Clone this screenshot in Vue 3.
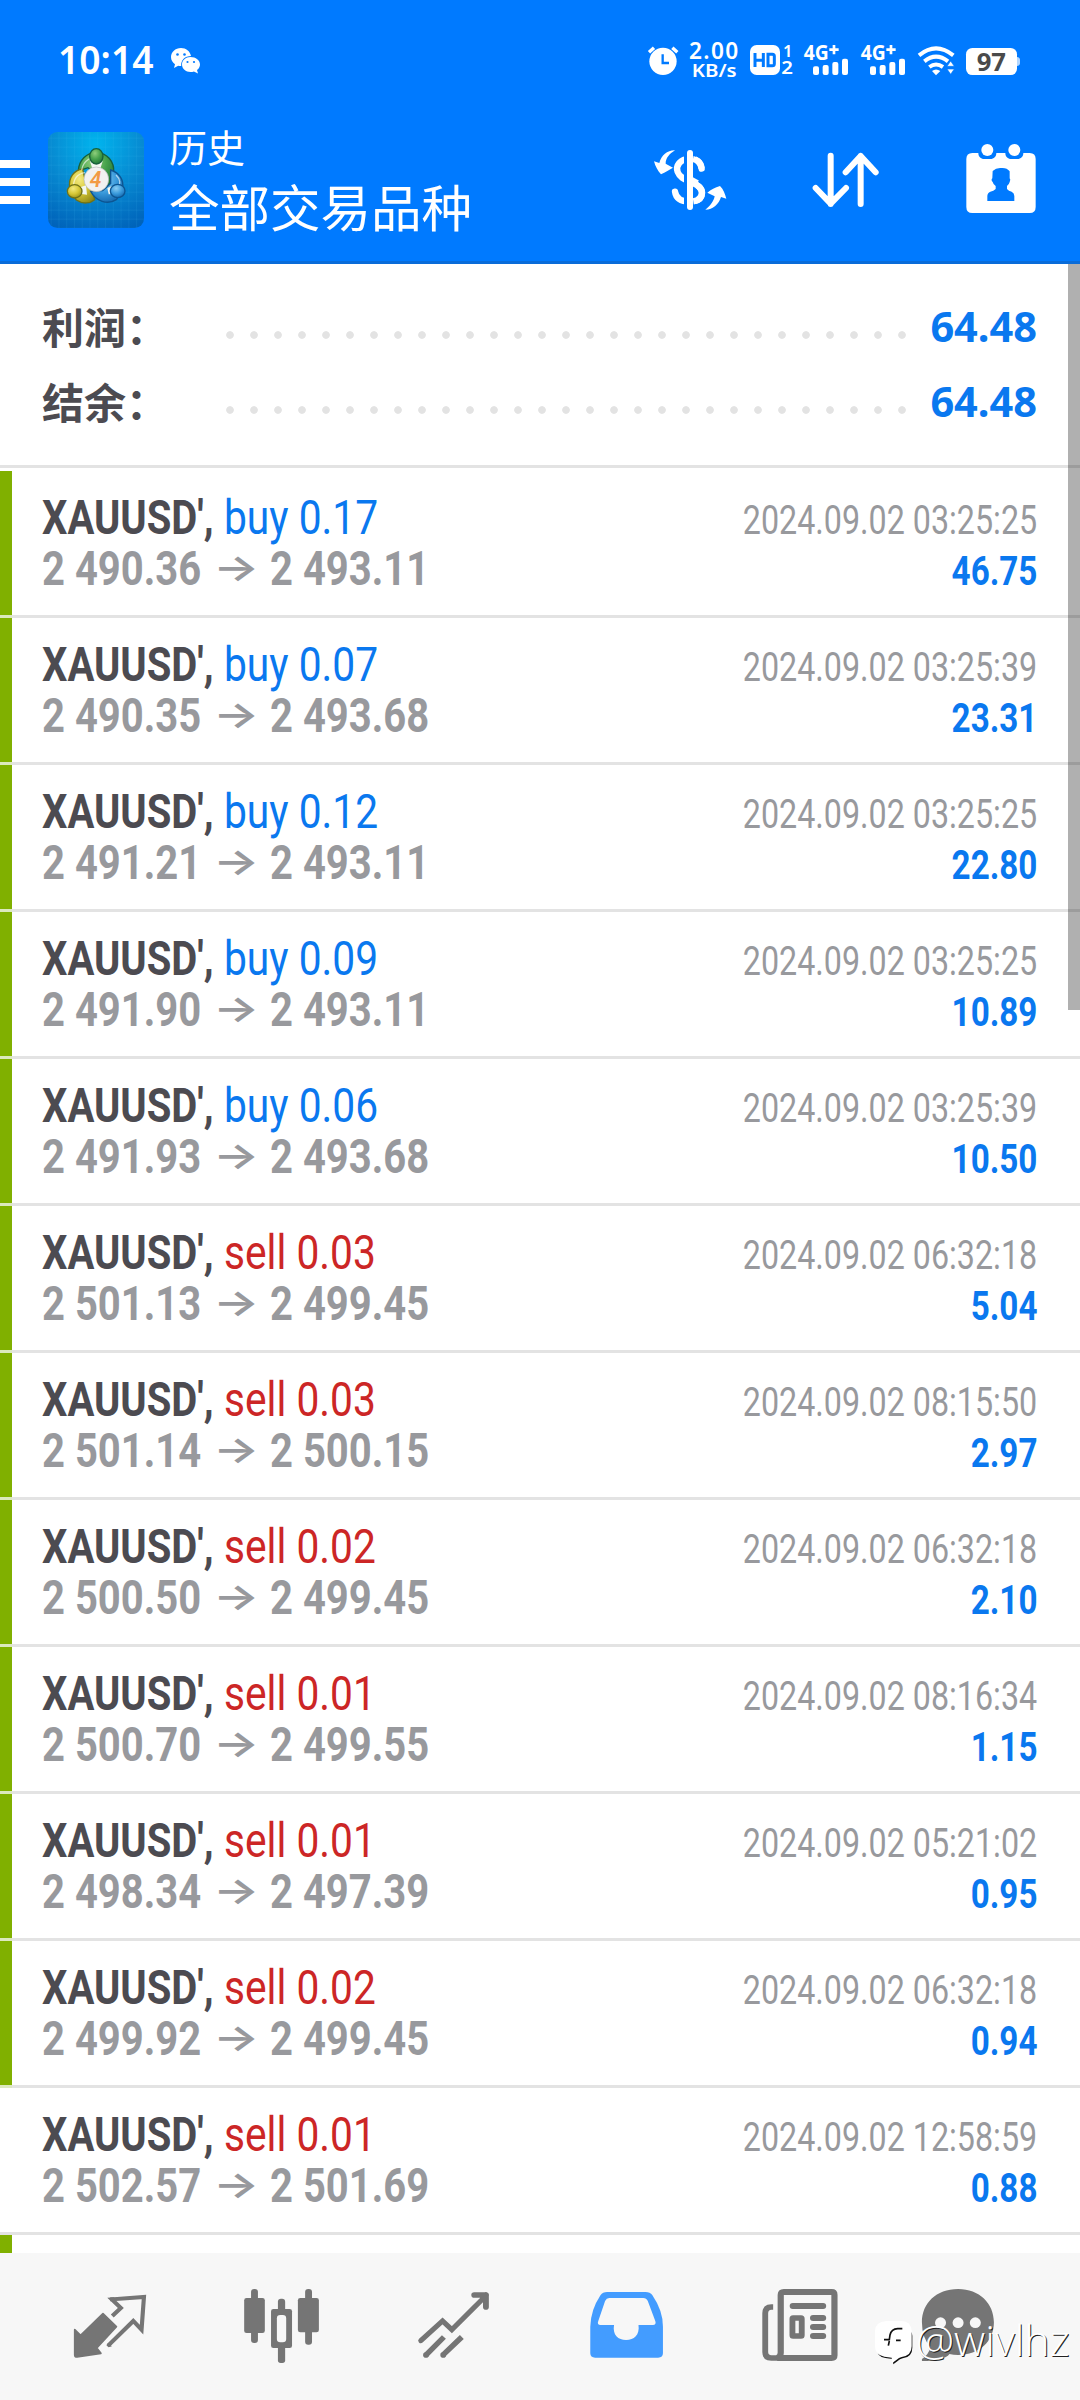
<script setup>
const summary = [
  { label: '利润：', value: '64.48' },
  { label: '结余：', value: '64.48' },
]

const deals = [
  ['buy', '0.17', '2 490.36', '2 493.11', '03:25:25', '46.75'],
  ['buy', '0.07', '2 490.35', '2 493.68', '03:25:39', '23.31'],
  ['buy', '0.12', '2 491.21', '2 493.11', '03:25:25', '22.80'],
  ['buy', '0.09', '2 491.90', '2 493.11', '03:25:25', '10.89'],
  ['buy', '0.06', '2 491.93', '2 493.68', '03:25:39', '10.50'],
  ['sell', '0.03', '2 501.13', '2 499.45', '06:32:18', '5.04'],
  ['sell', '0.03', '2 501.14', '2 500.15', '08:15:50', '2.97'],
  ['sell', '0.02', '2 500.50', '2 499.45', '06:32:18', '2.10'],
  ['sell', '0.01', '2 500.70', '2 499.55', '08:16:34', '1.15'],
  ['sell', '0.01', '2 498.34', '2 497.39', '05:21:02', '0.95'],
  ['sell', '0.02', '2 499.92', '2 499.45', '06:32:18', '0.94'],
  ['sell', '0.01', '2 502.57', '2 501.69', '12:58:59', '0.88', true],
].map(([side, volume, open, close, time, profit, plain]) => ({
  side, volume, open, close, time, profit, marked: !plain,
}))
</script>

<template>
  <div class="screen">
    <header class="header">
      <div class="status">
        <div class="status-left">
          <span class="clock"><span>10:14</span></span>
          <svg class="wechat" width="30" height="26" viewBox="0 0 30 26">
            <path fill="#fff" d="M10 0C4.300 0 0 4 0 9c0 3 1.500 5.500 4 7.200L3 20l4.200-2.200c1 .2 2 .3 3 .2C9.600 12 14 8 20 8 19 3.200 15 0 10 0Z" />
            <path fill="#fff" d="M19.500 9C14.700 9 11 12.300 11 16.500S14.700 24 19.500 24c1.200 0 2.400-.2 3.400-.6L27 25.500l-1-3.400c1.900-1.400 3-3.400 3-5.600C29 12.300 24.800 9 19.500 9Z" />
            <g fill="#007aff"><circle cx="6.500" cy="6.500" r="1.300" /><circle cx="13.500" cy="6.500" r="1.300" /><circle cx="16.500" cy="14" r="1.100" /><circle cx="23" cy="14" r="1.100" /></g>
          </svg>
        </div>
        <svg class="status-right" width="460" height="48" viewBox="0 48 1380 144">
          <circle cx="129" cy="124" r="41" fill="#fff" />
          <path d="M87 97L102 83M172 97L157 83" stroke="#fff" stroke-width="10" />
          <path d="M128 103V129H147" fill="none" stroke="#007aff" stroke-width="7" />
          <g fill="#fff" class="status-text">
            <text x="207" y="116" font-size="68" textLength="148">2.00</text>
            <text x="215" y="171" font-size="56" textLength="135" lengthAdjust="spacingAndGlyphs">KB/s</text>
          </g>
          <rect x="390" y="75" width="90" height="90" rx="20" fill="#fff" />
          <path d="M405 99V141M430 99V141M405 121H430M444 103H457Q463 103 463 109V131Q463 137 457 137H444Z" fill="none" stroke="#007aff" stroke-width="9" />
          <g fill="#fff" class="status-text">
            <text x="489" y="111" font-size="50">1</text>
            <text x="484" y="162" font-size="53" textLength="35" lengthAdjust="spacingAndGlyphs">2</text>
          </g>
          <g v-for="dx in [0, 171]" :key="dx" :transform="`translate(${dx} 0)`" fill="#fff">
            <text class="status-text heavy" x="551" y="119" font-size="62" textLength="75" lengthAdjust="spacingAndGlyphs">4G</text>
            <path d="M628 89H656M642 75V103" stroke="#fff" stroke-width="8" />
            <rect x="579" y="139" width="18" height="26" rx="6" />
            <rect x="608" y="135" width="18" height="30" rx="6" />
            <rect x="637" y="126" width="18" height="39" rx="6" />
            <rect x="666" y="116" width="18" height="49" rx="6" />
          </g>
          <g fill="none" stroke="#fff" stroke-width="12">
            <path d="M897 106Q948 64 1000 106" />
            <path d="M913 124Q948 96 984 124" />
            <path d="M928 141Q948 126 969 141" />
          </g>
          <path d="M936 153Q948 144 961 153L948 166Z" fill="#fff" />
          <path d="M992 123L1003 139H981ZM992 163L981 147H1003Z" fill="#fff" stroke="#007aff" stroke-width="2" />
          <rect x="1038" y="84" width="153" height="81" rx="19" fill="#fff" />
          <path d="M1191 111Q1200 112 1200 120V129Q1200 137 1191 138Z" fill="#fff" opacity=".7" />
          <text class="status-text heavy" x="1070" y="152" font-size="73" fill="#4a4a4a" textLength="88" lengthAdjust="spacingAndGlyphs">97</text>
        </svg>
      </div>

      <div class="toolbar">
        <div class="menu"><i></i><i></i><i></i></div>
        <svg class="logo" width="96" height="96" viewBox="54 36 288 288">
          <defs>
            <radialGradient id="sky" cx=".5" cy=".12" r=".95">
              <stop offset="0" stop-color="#00b4ee" /><stop offset=".5" stop-color="#078bd2" /><stop offset="1" stop-color="#0063ba" />
            </radialGradient>
            <pattern id="mesh" x="62" y="53" width="23.300" height="27" patternUnits="userSpaceOnUse">
              <path d="M0 0H23.300M0 0V27" stroke="#50c4f4" stroke-opacity=".3" stroke-width="2" />
            </pattern>
            <radialGradient id="green" cx=".4" cy=".3" r=".8"><stop offset="0" stop-color="#8fce7c" /><stop offset=".5" stop-color="#45a14b" /><stop offset="1" stop-color="#1b6c36" /></radialGradient>
            <radialGradient id="yellow" cx=".4" cy=".3" r=".8"><stop offset="0" stop-color="#f3ea80" /><stop offset=".5" stop-color="#d6c737" /><stop offset="1" stop-color="#8d8615" /></radialGradient>
            <radialGradient id="blue" cx=".4" cy=".3" r=".8"><stop offset="0" stop-color="#8accf2" /><stop offset=".5" stop-color="#3b9bdc" /><stop offset="1" stop-color="#0c5ea6" /></radialGradient>
          </defs>
          <rect x="54" y="36" width="288" height="288" rx="28" fill="url(#sky)" />
          <rect x="54" y="36" width="288" height="288" rx="28" fill="url(#mesh)" />
          <g stroke-width="4">
            <path d="M145 153C146 120 170 98 199 98C231 98 254 125 251 158C250 176 243 190 233 198L212 174L174 143Z" fill="url(#green)" stroke="#17603a" />
            <path d="M158 147C132 150 115 172 119 203L139 240C158 253 180 251 194 239L186 206L168 190Z" fill="url(#yellow)" stroke="#6f7218" />
            <path d="M242 150C269 158 283 182 277 207L260 238C233 257 196 243 182 214L218 212L242 190Z" fill="url(#blue)" stroke="#0d5592" />
            <path d="M130 204C130 175 143 161 165 158M155 150C160 120 187 107 210 112M258 165C272 178 272 194 264 202" fill="none" stroke="#fff" stroke-opacity=".6" stroke-width="4" />
            <path d="M180 124L218 124L211 146H187ZM153 201L168 196L171 224L155 222ZM232 204L246 198L249 222L236 223Z" fill="#f3f7f1" />
            <ellipse cx="199" cy="109" rx="20" ry="23" fill="url(#green)" stroke="#17603a" />
            <ellipse cx="134" cy="214" rx="22" ry="20" fill="url(#yellow)" stroke="#6f7218" />
            <ellipse cx="263" cy="213" rx="22" ry="20" fill="url(#blue)" stroke="#0d5592" />
          </g>
          <circle cx="199" cy="178" r="37" fill="#f2f1f0" stroke="#b4b8ba" stroke-width="2" />
          <text x="179" y="201" font-size="64" class="logo-digit" textLength="35" lengthAdjust="spacingAndGlyphs">4</text>
        </svg>
        <div class="titles">
          <div class="title-small">历史</div>
          <div class="title-big">全部交易品种</div>
        </div>
        <div class="actions">
          <svg width="153.330" height="96" viewBox="0 336 460 288">
            <g fill="#fff">
              <path d="M165 391C148 402 137 414 137 431L159 443C149 449 136 456 123 463C113 452 106 440 102 424L118 429C124 405 143 390 165 391Z" />
              <path d="M256 569C270 558 281 545 284 529L262 518C273 509 285 503 300 498C311 509 315 522 319 536L303 531C297 552 279 569 256 569Z" />
            </g>
            <path d="M245 446C243 425 228 415 210 416C180 417 166 437 173 456C179 472 194 478 210 485C232 494 247 503 246 520C244 539 226 545 209 545C184 545 168 536 165 515" fill="none" stroke="#fff" stroke-width="19" stroke-linecap="round" />
            <path d="M210 390V570" stroke="#007aff" stroke-width="36" />
            <path d="M210 478L232 490" stroke="#fff" stroke-width="19" />
            <path d="M219 417Q240 421 245 445M220 544Q246 540 246 518Q245 500 219 489" fill="none" stroke="#fff" stroke-width="19" />
            <path d="M210 399V561" stroke="#fff" stroke-width="18" stroke-linecap="round" />
          </svg>
          <svg width="153.330" height="96" viewBox="460 336 460 288">
            <path d="M633 407V552M588 504L633 551L679 504M723 552V408M678 457L723 408L768 457" fill="none" stroke="#fff" stroke-width="18" stroke-linecap="round" stroke-linejoin="round" />
          </svg>
          <svg width="153.330" height="96" viewBox="920 336 460 288">
            <path fill="#fff" d="M1056 399H1074C1074 410 1081 417 1092 417H1110C1121 417 1128 410 1128 399H1155C1155 410 1162 417 1173 417H1191C1202 417 1209 410 1209 399H1228Q1246 399 1246 417V561Q1246 579 1228 579H1056Q1038 579 1038 561V417Q1038 399 1056 399Z" />
            <circle cx="1101" cy="390" r="18" fill="#fff" /><circle cx="1182" cy="390" r="18" fill="#fff" />
            <path fill="#007aff" d="M1117 453Q1128 442 1144 444Q1160 443 1168 454V475Q1172 479 1168 486Q1166 494 1160 498V507Q1165 513 1174 515Q1182 519 1182 528V543H1101V528Q1101 519 1110 515Q1120 513 1126 507V498Q1119 494 1117 486Q1111 480 1116 475Z" />
          </svg>
        </div>
      </div>
    </header>

    <main class="content">
      <section class="summary">
        <div v-for="item in summary" :key="item.label" class="summary-row">
          <span class="summary-label">{{ item.label }}</span>
          <span class="dots"></span>
          <span class="summary-value">{{ item.value }}</span>
        </div>
      </section>

      <section class="deals">
        <article v-for="(deal, i) in deals" :key="i" class="deal" :class="{ marked: deal.marked }">
          <div class="deal-main">
            <div class="deal-line">
              <span class="symbol"><b>XAUUSD',</b></span>
              <span class="side" :class="deal.side">{{ deal.side }} {{ deal.volume }}</span>
            </div>
            <div class="deal-line prices">
              <span class="price"><b>{{ deal.open }}</b></span>
              <span class="arrow"><span>→</span></span>
              <span class="price"><b>{{ deal.close }}</b></span>
            </div>
          </div>
          <div class="deal-side">
            <span class="time">2024.09.02 {{ deal.time }}</span>
            <span class="profit">{{ deal.profit }}</span>
          </div>
        </article>
        <article class="deal marked partial"></article>
      </section>
      <div class="scrollbar"></div>
    </main>

    <nav class="tabs">
      <svg viewBox="0 579 522.670 441" preserveAspectRatio="none">
        <path fill="#757575" stroke="#757575" stroke-width="5" stroke-linejoin="round" d="M299 761L338 800L281 864L293 880L224 891Q217 891 217 884V809L234 826Z" />
        <path fill="none" stroke="#757575" stroke-width="12" d="M326 768L351 744L325 718L418 711L411 809L387 783L314 857" />
        <path fill="#757575" d="M320 712L332 712V724H320ZM309 856L315 862L325 859L314 850Z" />
      </svg>
      <svg viewBox="522.670 579 522.670 441" preserveAspectRatio="none">
        <g fill="#757575">
          <rect x="729" y="687" width="20" height="162" rx="9" /><rect x="709" y="714" width="60" height="105" rx="7" />
          <rect x="886" y="687" width="20" height="167" rx="9" /><rect x="865" y="714" width="61" height="103" rx="7" />
          <rect x="807" y="716" width="21" height="50" rx="9" /><rect x="807" y="850" width="21" height="59" rx="8" />
          <rect x="787" y="747" width="61" height="117" rx="7" />
        </g>
        <rect x="804" y="765" width="27" height="82" rx="10" fill="#f7f7f7" />
      </svg>
      <svg viewBox="1045.330 579 522.670 441" preserveAspectRatio="none">
        <path fill="none" stroke="#757575" stroke-width="15" stroke-linecap="round" d="M1222 842L1285 783L1312 809L1405 713" />
        <path fill="none" stroke="#757575" stroke-width="17" stroke-linecap="round" stroke-linejoin="round" d="M1377 705H1411V741M1403 714L1411 705" />
        <path fill="none" stroke="#757575" stroke-width="16" d="M1236 886L1289 831M1285 886L1341 831" />
        <circle cx="1237" cy="885" r="8.500" fill="#757575" /><circle cx="1287" cy="885" r="8.500" fill="#757575" />
      </svg>
      <svg viewBox="0 579 522.670 441" preserveAspectRatio="none">
        <path fill="#439cff" d="M195 696H306Q320 696 326 705Q357 752 357 800V879Q357 893 343 893H160Q146 893 146 879V800Q147 750 176 705Q182 696 195 696Z" />
        <path fill="#f7f7f7" d="M201 714H300Q309 714 313 723L335 784Q338 795 328 795H286C290 825 273 840 250 840S210 825 215 795H176Q165 795 169 784L189 723Q193 714 201 714Z" />
      </svg>
      <svg viewBox="522.670 579 522.670 441" preserveAspectRatio="none">
        <path fill="none" stroke="#757575" stroke-width="17" d="M677 741H672Q654 741 654 760V876Q654 894 672 894H700" />
        <path fill="none" stroke="#757575" stroke-width="18" d="M708 696H847Q855 696 855 704V886Q855 894 847 894H689Q699 890 699 878V705Q699 696 708 696Z" />
        <path fill="none" stroke="#757575" stroke-width="18" stroke-linecap="round" d="M734 738H822M793 774H822M793 801H822M793 828H822" />
        <rect x="733" y="774" width="27" height="54" rx="2" fill="none" stroke="#757575" stroke-width="17" />
      </svg>
      <svg viewBox="1045.330 579 522.670 441" preserveAspectRatio="none">
        <path fill="#757575" d="M1214 687C1276 687 1318 730 1318 787S1276 885 1214 885Q1200 885 1189 882Q1174 903 1109 903V897Q1127 887 1134 861Q1109 835 1109 787C1109 730 1150 687 1214 687Z" />
        <g fill="#f7f7f7"><circle cx="1163" cy="788" r="16" /><circle cx="1214" cy="788" r="16" /><circle cx="1264" cy="788" r="16" /></g>
      </svg>
      <div class="watermark">
        <svg width="40" height="46" viewBox="0 0 120 138">
          <path fill="#111" transform="translate(3 4)" d="M34 20H80Q108 20 109 40V76Q109 104 80 108L72 111L52 126L50 110L28 107Q2 103 2 76V50Z" />
          <path fill="#fff" d="M34 0H80Q108 0 110 30V76Q110 104 80 108L72 111L52 126L50 110L28 107Q0 103 0 76V30Q0 3 34 0Z" />
          <path fill="none" stroke="#111" stroke-width="5" d="M82 23H68Q49 24 45 42L43 56H27M63 58H77M43 60L40 74" />
        </svg>
        <span>@wivlhz</span>
      </div>
    </nav>
  </div>
</template>

<style>
body {
  margin: 0;
  background: #fff;
}
</style>

<style scoped>
.screen {
  display: flex;
  flex-direction: column;
  width: 1080px;
  height: 2400px;
  overflow: hidden;
  background: #fff;
  font-family: Roboto, "Noto Sans CJK SC", sans-serif;
}
.header {
  box-sizing: border-box;
  height: 264px;
  flex: none;
  background: #007aff;
  border-bottom: 3px solid #0a6cd9;
  color: #fff;
}
.status {
  display: flex;
  justify-content: space-between;
  height: 84px;
  padding-top: 36px;
}
.status-left {
  display: flex;
  align-items: flex-start;
  padding-left: 58px;
}
.clock {
  width: 113px;
  font: 600 39px/46px "Noto Sans", sans-serif;
}
.clock span {
  display: inline-block;
  transform: scaleX(0.955);
  transform-origin: left;
}
.wechat {
  margin-top: 12px;
}
.status-text {
  font-family: "Noto Sans", sans-serif;
  font-weight: 600;
}
.status-text.heavy {
  font-weight: 700;
}
.toolbar {
  display: flex;
  height: 132px;
  padding-top: 12px;
}
.menu {
  display: flex;
  flex-direction: column;
  gap: 10px;
  width: 30px;
  margin: 28px 18px 0 0;
}
.menu i {
  height: 8px;
  background: #fff;
}
.logo-digit {
  font-family: Roboto, sans-serif;
  font-weight: 600;
  font-style: italic;
  fill: #f29a44;
}
.titles {
  flex: 1;
  padding-left: 25px;
  font-family: "Noto Sans CJK SC", sans-serif;
}
.title-small {
  height: 52px;
  margin-top: -12px;
  font-size: 38px;
  line-height: 52px;
}
.title-big {
  font-size: 50.500px;
  line-height: 68px;
  margin-top: -1px;
  white-space: nowrap;
}
.actions {
  display: flex;
  width: 460px;
}
.content {
  position: relative;
  flex: 1;
  overflow: hidden;
}
.summary {
  box-sizing: border-box;
  height: 204px;
  padding: 26px 43px 0 42px;
  border-bottom: 3px solid #e3e3e3;
}
.summary-row {
  display: flex;
  height: 75px;
}
.summary-label {
  width: 176px;
  color: #4c4b51;
  font: 700 42px/71px "Noto Sans CJK SC", sans-serif;
}
.dots {
  width: 696px;
  height: 24px;
  margin-top: 33px;
  background: radial-gradient(circle at 12px 12px, #e3e3e3 3.400px, transparent 4.200px) 0 0 / 24px 24px;
}
.summary-value {
  display: flex;
  flex: 1;
  justify-content: flex-end;
  color: #0a78ef;
  font: 700 41.500px/73px "Noto Sans", sans-serif;
}
.deals {
  padding-top: 3px;
}
.deal {
  box-sizing: border-box;
  display: flex;
  justify-content: space-between;
  height: 147px;
  padding: 21px 43px 0 42px;
  border-bottom: 3px solid #e3e3e3;
}
.deal.marked {
  padding-left: 30px;
  border-left: 12px solid #80b000;
  border-bottom: 0;
  background: linear-gradient(#e3e3e3, #e3e3e3) 0 100% / 100% 3px no-repeat;
  border-image: linear-gradient(#80b000 144px, #dce9be 144px) 0 0 0 12;
}
.deal-line {
  display: flex;
  height: 51px;
  font-size: 48px;
  line-height: 51px;
  white-space: nowrap;
}
.symbol {
  width: 182px;
  color: #4c4b51;
}
.symbol b,
.price b,
.side {
  display: inline-block;
  transform: scaleX(0.833);
  transform-origin: left;
}
.side {
  transform: scaleX(0.848);
}
.buy {
  color: #0a78ef;
}
.sell {
  color: #cc2626;
}
.prices {
  color: #98999d;
}
.price {
  width: 174px;
}
.arrow {
  width: 54px;
  font: 600 36px/49px Inter, sans-serif;
}
.arrow span {
  display: inline-block;
  transform: translateX(-3px) scaleX(1.35);
  transform-origin: left;
}
.deal-side {
  display: flex;
  flex-direction: column;
  align-items: flex-end;
  padding-top: 3px;
  font-size: 40px;
  line-height: 51px;
}
.time,
.profit {
  transform: scaleX(0.806);
  transform-origin: right;
  white-space: nowrap;
}
.time {
  color: #98999d;
}
.profit {
  color: #0a78ef;
  font-weight: 700;
  transform: scaleX(0.83);
}
.scrollbar {
  position: absolute;
  top: 0;
  right: 0;
  width: 12px;
  height: 746px;
  background: rgba(0, 0, 0, 0.31);
}
.tabs {
  position: relative;
  display: grid;
  grid-template-columns: repeat(6, 180px);
  flex: none;
  height: 147px;
  background: #f7f7f7;
}
.tabs > svg {
  width: 180px;
  height: 147px;
}
.watermark {
  position: absolute;
  top: 68px;
  left: 875px;
  display: flex;
  gap: 1px;
  color: #fff;
  font: 300 43px/38px "Open Sans", "Noto Sans", sans-serif;
  text-shadow: 1px 1px 0 #222;
}
</style>
